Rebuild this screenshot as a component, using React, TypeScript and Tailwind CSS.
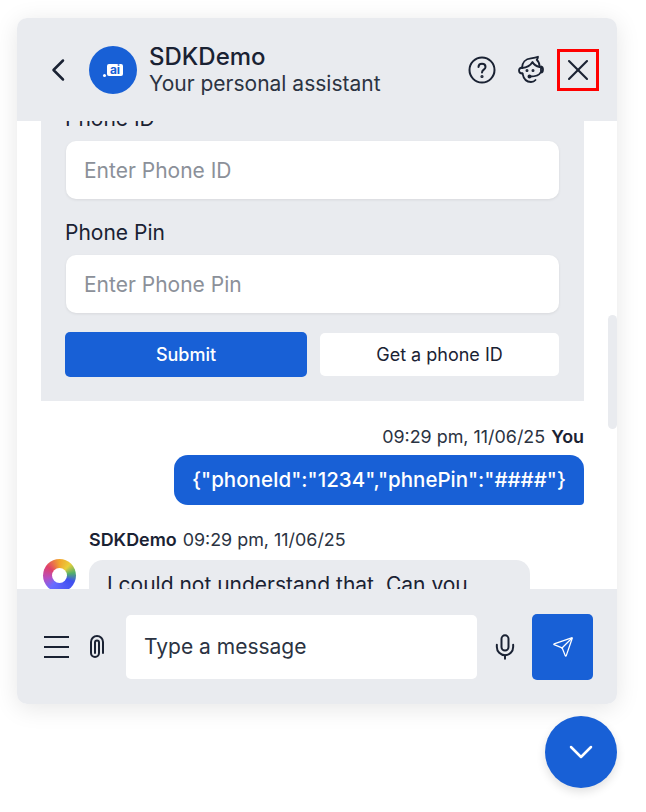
import { X, Mic, Send } from "lucide-react";

function AgentIcon() {
  return (
    <svg width="28" height="30" viewBox="0 0 28 30" fill="none" stroke="#1a2233" strokeWidth="1.800" strokeLinecap="round" strokeLinejoin="round">
      <path d="M6 13C6 7.500 9.500 3.800 15 3.300c3-.3 5-.6 7-1.500-.2 1.500-.6 2.200-1.300 3 2 1.700 3 4.200 3 7.200" />
      <path d="M6 13c4.500-.5 8.500-2.500 10.500-6 1.200 2.500 3.500 4.200 7.200 5" />
      <path d="M6 12.500c-2 .3-3 1.500-3 3s1.200 3 3.500 3" />
      <path d="M25 11.500c1.500.3 2 1.500 2 3s-.7 3-2 3z" />
      <path d="M6.500 18.500c1 5 4 8.500 8.500 8.500 2 0 3.500-.7 4.500-2" />
      <path d="M24.500 17.500c-1 2.500-4 4-10.500 4" />
      <circle cx="13.500" cy="21.500" r="1.100" fill="#1a2233" />
      <circle cx="11" cy="15.500" r=".6" fill="#1a2233" />
      <circle cx="17" cy="15.500" r=".6" fill="#1a2233" />
    </svg>
  );
}

function HelpIcon() {
  return (
    <svg width="28" height="28" viewBox="0 0 28 28" fill="none" stroke="#1a2233" strokeWidth="2" strokeLinecap="round">
      <circle cx="14" cy="14" r="12.500" />
      <path d="M10.500 11c0-2 1.500-3.300 3.500-3.300s3.500 1.300 3.500 3.200c0 2.800-3.500 2.700-3.500 5.600" />
      <circle cx="14" cy="20.500" r=".6" fill="#1a2233" />
    </svg>
  );
}

function BackIcon() {
  return (
    <svg width="14" height="24" viewBox="0 0 14 24" fill="none" stroke="#1a2233" strokeWidth="2.500" strokeLinecap="round" strokeLinejoin="round">
      <path d="M12 2.500 2.500 12 12 21.500" />
    </svg>
  );
}

function ClipIcon() {
  return (
    <svg width="16" height="24" viewBox="0 -1 16 24" fill="none" stroke="#1a2233" strokeWidth="2" strokeLinecap="round">
      <path d="M6 17V6.500a2 2 0 0 1 4 0V17a4 4 0 0 1-8 0V6a6 6 0 0 1 12 0v11" />
    </svg>
  );
}

function BrandMark() {
  return (
    <div className="flex items-end gap-[1px]">
      <div className="mb-[-1px] h-[3px] w-[3px] rounded-full bg-white" />
      <div className="flex h-[12px] w-[16px] items-center justify-center rounded-[2px] bg-white text-[12px] leading-none font-bold text-[#1860d6]">
        ai
      </div>
    </div>
  );
}

function FormField({ label, placeholder }: { label: string; placeholder: string }) {
  return (
    <div className="flex flex-col gap-[11px]">
      <label className="pt-[1px] text-[21px] leading-[23px] text-[#1a2233]">{label}</label>
      <div className="ml-[1px] flex h-[58px] items-center rounded-[10px] bg-white px-[18px] pt-[2px] text-[21px] text-[#8b9099] shadow-[0_1px_3px_rgba(0,0,0,0.08)]">
        {placeholder}
      </div>
    </div>
  );
}

export default function App() {
  return (
    <div className="relative h-[812px] w-[646px] overflow-hidden bg-white font-['Inter',sans-serif] text-[#1a2233]">
      <div className="ml-[17px] mt-[18px] flex h-[686px] w-[600px] flex-col overflow-hidden rounded-[10px] bg-white shadow-[0_4px_24px_rgba(0,0,0,0.10)]">
        <header className="flex h-[103px] shrink-0 items-center bg-[#e9ebef] pl-[34px]">
          <BackIcon />
          <div className="ml-[24px] flex h-[48px] w-[48px] items-center justify-center rounded-full bg-[#1860d6]">
            <BrandMark />
          </div>
          <div className="ml-[12px] flex flex-col">
            <span className="text-[24px] leading-[28px] font-medium text-[#1a2233]">SDKDemo</span>
            <span className="text-[21px] leading-[26px] text-[#2b3342]">Your personal assistant</span>
          </div>
          <div className="ml-auto mr-[18px] flex items-center">
            <HelpIcon />
            <div className="ml-[20px]">
              <AgentIcon />
            </div>
            <div className="ml-[13px] flex h-[42px] w-[42px] items-center justify-center border-[3px] border-[#ff0000]">
              <X size={36} strokeWidth={1.4} className="text-[#1a2233]" />
            </div>
          </div>
        </header>

        <div className="relative flex-1 overflow-hidden">
          <div className="mt-[-15px] flex flex-col pl-[24px] pr-[33px]">
            <section className="flex flex-col gap-[19px] bg-[#e9ebef] pl-[24px] pr-[25px] pb-[24px]">
              <div className="flex flex-col gap-[21px]">
                <FormField label="Phone ID" placeholder="Enter Phone ID" />
                <FormField label="Phone Pin" placeholder="Enter Phone Pin" />
              </div>
              <div className="flex items-center gap-[13px]">
                <button className="h-[45px] w-[242px] rounded-[5px] bg-[#1860d6] text-[18px] font-medium text-white">Submit</button>
                <button className="h-[43px] w-[239px] rounded-[5px] bg-white text-[18px] font-normal text-[#1a2233]">Get a phone ID</button>
              </div>
            </section>

            <div className="mt-[24px] flex justify-end gap-[6px] text-[17.9px] leading-[24px]">
              <span className="text-[#2b3342]">09:29 pm, 11/06/25</span>
              <span className="font-semibold">You</span>
            </div>
            <div className="mt-[6px] flex justify-end">
              <div className="flex h-[50px] w-[410px] items-center justify-center rounded-[14px] rounded-br-[4px] bg-[#1860d6] text-[20.5px] font-medium text-white">
                {'{"phoneId":"1234","phnePin":"####"}'}
              </div>
            </div>

            <div className="ml-[48px] mt-[23px] flex gap-[6px] text-[17.9px] leading-[24px]">
              <span className="font-semibold">SDKDemo</span>
              <span className="text-[#2b3342]">09:29 pm, 11/06/25</span>
            </div>
            <div className="mt-[8px] flex items-start">
              <div className="ml-[2px] mt-[-1px] h-[33px] w-[33px] shrink-0 rounded-full bg-[conic-gradient(#f2a52c,#e9cf3a_12%,#52b06a_22%,#3f4ff0_32%,#6a6cff_60%,#b84fc0_72%,#e0406a_85%,#f2a52c)] p-[9px]">
                <div className="h-full w-full rounded-full bg-white" />
              </div>
              <div className="ml-[13px] w-[441px] rounded-[14px] bg-[#e9ebef] px-[18px] py-[11px] text-[21px] leading-[28px]">
                I could not understand that. Can you please try again?
              </div>
            </div>
          </div>
          <div className="absolute right-0 top-[194px] h-[114px] w-[9px] rounded-full bg-[#e9ebef]" />
        </div>

        <footer className="flex h-[115px] shrink-0 items-center bg-[#e9ebef] pl-[27px]">
          <div className="flex w-[25px] flex-col gap-[8px]">
            <div className="h-[2px] bg-[#1a2233]" />
            <div className="h-[2px] bg-[#1a2233]" />
            <div className="h-[2px] bg-[#1a2233]" />
          </div>
          <div className="ml-[20px]">
            <ClipIcon />
          </div>
          <div className="ml-[21px] flex h-[64px] w-[351px] items-center rounded-[5px] bg-white px-[18px] text-[21px] text-[#2b3342]">
            Type a message
          </div>
          <Mic size={28} strokeWidth={1.7} className="ml-[14px] text-[#1a2233]" />
          <div className="ml-[13px] flex h-[66px] w-[61px] items-center justify-center rounded-[5px] bg-[#1860d6]">
            <Send size={22} strokeWidth={1.4} className="text-white" />
          </div>
        </footer>
      </div>

      <div className="absolute left-[545px] top-[716px] flex h-[72px] w-[72px] items-center justify-center rounded-full bg-[#1860d6] shadow-[0_4px_10px_rgba(0,0,0,0.12)]">
        <svg width="26" height="16" viewBox="0 0 26 16" fill="none" stroke="white" strokeWidth="2.500" strokeLinecap="round" strokeLinejoin="round">
          <path d="M3 3 13 13 23 3" />
        </svg>
      </div>
    </div>
  );
}
